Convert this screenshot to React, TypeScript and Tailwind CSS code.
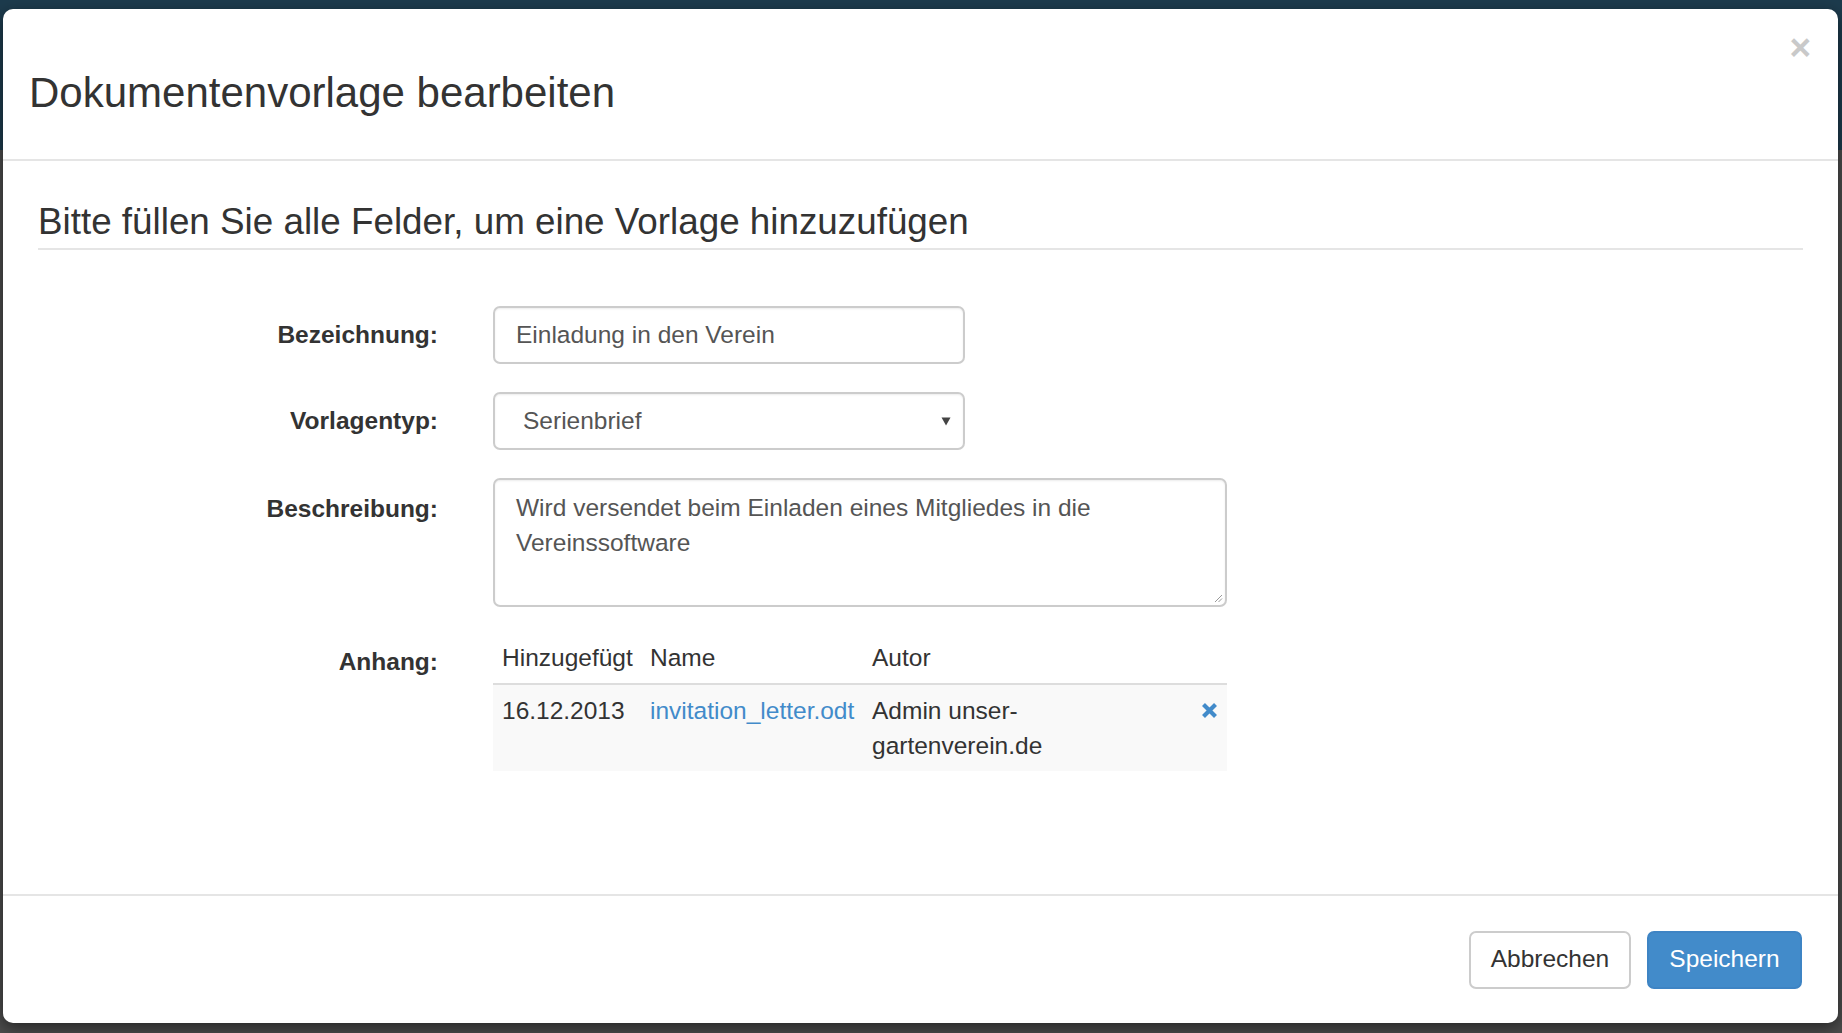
import React from 'react';

type Attachment = {
  id: string;
  added: string;
  name: string;
  author: string;
};

const attachments: Attachment[] = [
  { id: 'a1', added: '16.12.2013', name: 'invitation_letter.odt', author: 'Admin unser-gartenverein.de' },
];

function RemoveIcon() {
  return (
    <svg width="17" height="17" viewBox="0 0 17 17" className="block">
      <path d="M2.5 2.5 L14.5 14.5 M14.5 2.5 L2.5 14.5" stroke="#428bca" strokeWidth="4.2" strokeLinecap="butt" />
    </svg>
  );
}

function FieldRow({ label, children, labelPad = 'pt-[11px]' }: { label: string; children: React.ReactNode; labelPad?: string }) {
  return (
    <div className="grid grid-cols-[400px_734px] gap-x-[55px]">
      <label className={`${labelPad} text-right text-[24.5px] font-bold leading-[35px] text-[#333]`}>{label}</label>
      <div>{children}</div>
    </div>
  );
}

export default function App() {
  return (
    <div className="min-h-screen bg-[linear-gradient(to_bottom,#1d3b4d_0px,#1d3b4d_150px,#4c4c4c_150px)] pt-[9px] pl-[3px] pr-[4px] pb-[10px] font-['Liberation_Sans',Arial,sans-serif] text-[#333]">
      <div className="relative flex h-[1014px] flex-col rounded-[10px] bg-white shadow-[0_5px_15px_rgba(0,0,0,0.5)]">
        <button className="absolute right-[27px] top-[19px] text-[37px] font-bold leading-[40px] text-[#c9c9c9]">×</button>

        {/* header */}
        <div className="h-[152px] border-b-2 border-[#e5e5e5] pl-[26px] pt-[54px]">
          <h4 className="text-[42px] leading-[60px] text-[#333]">Dokumentenvorlage bearbeiten</h4>
        </div>

        {/* body */}
        <div className="flex-1 px-[35px] pt-[41px]">
          <h3 className="border-b-2 border-[#e5e5e5] pb-[6px] text-[36.8px] leading-[40px] text-[#333]">
            Bitte füllen Sie alle Felder, um eine Vorlage hinzuzufügen
          </h3>

          <div className="mt-[56px] flex flex-col gap-[28px]">
            <FieldRow label="Bezeichnung:">
              <div className="flex h-[58px] w-[472px] items-center rounded-[7px] border-2 border-[#ccc] px-[21px] text-[24.5px] text-[#555] shadow-[inset_0_1px_2px_rgba(0,0,0,0.075)]">
                Einladung in den Verein
              </div>
            </FieldRow>

            <FieldRow label="Vorlagentyp:">
              <div className="flex h-[58px] w-[472px] items-center justify-between rounded-[7px] border-2 border-[#ccc] pl-[28px] pr-[12px] text-[24.5px] text-[#555] shadow-[inset_0_1px_2px_rgba(0,0,0,0.075)]">
                <span>Serienbrief</span>
                <svg width="10" height="10" viewBox="0 0 10 10">
                  <path d="M0.5 1.5 L9.5 1.5 L5 9.5 Z" fill="#444" />
                </svg>
              </div>
            </FieldRow>

            <FieldRow label="Beschreibung:" labelPad="pt-[13px]">
              <div className="relative h-[129px] w-[734px] rounded-[7px] border-2 border-[#ccc] px-[21px] py-[10px] text-[24.5px] leading-[35px] text-[#555] shadow-[inset_0_1px_2px_rgba(0,0,0,0.075)]">
                Wird versendet beim Einladen eines Mitgliedes in die Vereinssoftware
                <svg width="9" height="9" viewBox="0 0 9 9" className="absolute bottom-[2px] right-[2px]">
                  <path d="M1 8 L8 1 M4.5 8 L8 4.5" stroke="#999" strokeWidth="1" />
                </svg>
              </div>
            </FieldRow>

            <div className="-mt-[3px]">
              <FieldRow label="Anhang:" labelPad="pt-[12px]">
                <table className="w-[734px] table-fixed border-collapse text-[24.5px] leading-[35px]">
                  <colgroup>
                    <col className="w-[148px]" />
                    <col className="w-[222px]" />
                    <col className="w-[329px]" />
                    <col className="w-[35px]" />
                  </colgroup>
                  <thead>
                    <tr className="border-b-2 border-[#ddd]">
                      <th className="px-[9px] py-[8px] text-left font-normal">Hinzugefügt</th>
                      <th className="px-[9px] py-[8px] text-left font-normal">Name</th>
                      <th className="px-[9px] py-[8px] text-left font-normal">Autor</th>
                      <th className="px-[9px] py-[8px]"></th>
                    </tr>
                  </thead>
                  <tbody>
                    {attachments.map((a) => (
                      <tr key={a.id} className="bg-[#f9f9f9]">
                        <td className="px-[9px] py-[8px] align-top">{a.added}</td>
                        <td className="px-[9px] py-[8px] align-top">
                          <a className="text-[#428bca]">{a.name}</a>
                        </td>
                        <td className="px-[9px] py-[8px] align-top">{a.author}</td>
                        <td className="py-[8px] pl-[0px] pr-[9px] align-top">
                          <div className="flex h-[35px] items-center justify-end">
                            <RemoveIcon />
                          </div>
                        </td>
                      </tr>
                    ))}
                  </tbody>
                </table>
              </FieldRow>
            </div>
          </div>
        </div>

        {/* footer */}
        <div className="flex h-[129px] items-center justify-end gap-[16px] border-t-2 border-[#e5e5e5] pr-[36px]">
          <button className="h-[58px] w-[162px] rounded-[7px] border-2 border-[#ccc] bg-white text-[24.5px] text-[#333]">
            Abbrechen
          </button>
          <button className="h-[58px] w-[155px] rounded-[7px] border-2 border-[#3e84c4] bg-[#428bca] text-[24.5px] text-white">
            Speichern
          </button>
        </div>
      </div>
    </div>
  );
}
